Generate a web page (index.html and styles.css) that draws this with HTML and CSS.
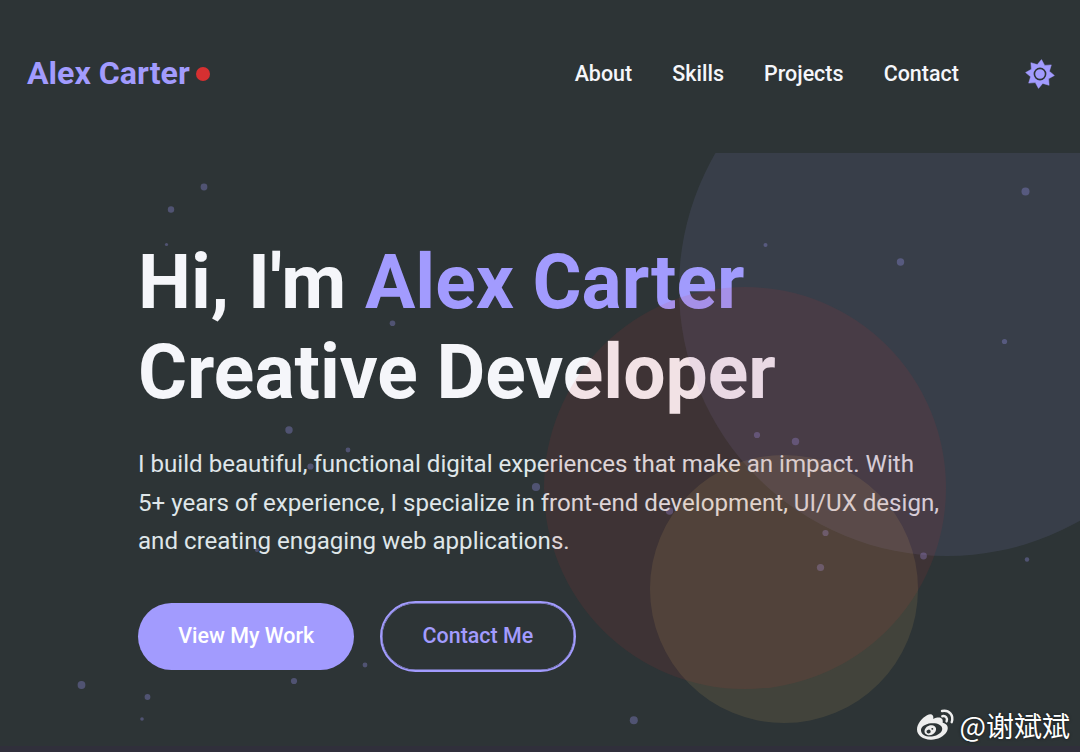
FILE: index.html
```html
<!doctype html>
<html lang="en">
<head>
    <meta charset="UTF-8">
    <meta name="viewport" content="width=device-width, initial-scale=1.0">
    <title>Alex Carter | Creative Developer</title>
    <link rel="stylesheet" href="styles.css">
</head>
<body>
<header class="header">
    <a href="#" class="logo">Alex Carter<span class="logo-dot"></span></a>
    <nav class="nav">
        <a href="#about">About</a>
        <a href="#skills">Skills</a>
        <a href="#projects">Projects</a>
        <a href="#contact">Contact</a>
        <button class="theme-toggle" aria-label="Toggle theme">
            <svg viewBox="-15 -15 30 30" width="30" height="30">
                <path fill="#a29bfe" stroke="#a29bfe" stroke-width=".5" stroke-linejoin="round" d="M1.5-14.4 4.7-8.6 11.3-9.1 9.4-2.7 14.4 1.5 8.6 4.7 9.1 11.3 2.7 9.4-1.5 14.4-4.7 8.6-11.3 9.1-9.4 2.7-14.4-1.5-8.6-4.7-9.1-11.3-2.7-9.4Z"/>
                <circle r="5.6" fill="#a29bfe" stroke="#2d3436" stroke-width="1.6"/>
            </svg>
        </button>
    </nav>
</header>

<section class="hero">
    <!-- particles -->
    <svg class="particles" width="1080" height="593" viewBox="0 153 1080 593">
        <circle cx="204" cy="187" r="3.4"/>
        <circle cx="171" cy="209.5" r="3.2"/>
        <circle cx="166.5" cy="244.5" r="1.6"/>
        <circle cx="392.5" cy="323.3" r="2.8"/>
        <circle cx="289" cy="430" r="3.7"/>
        <circle cx="348" cy="450" r="2.4"/>
        <circle cx="310.5" cy="466.5" r="3.1"/>
        <circle cx="536" cy="487" r="4.1"/>
        <circle cx="257" cy="550" r="2"/>
        <circle cx="669.5" cy="511" r="3.7"/>
        <circle cx="757" cy="435" r="3.1"/>
        <circle cx="795.5" cy="441.5" r="3.7"/>
        <circle cx="825.5" cy="533" r="3.1"/>
        <circle cx="820.5" cy="567.5" r="3.6"/>
        <circle cx="923.5" cy="556" r="3.4"/>
        <circle cx="1027" cy="559.5" r="2.2"/>
        <circle cx="1025.5" cy="191.5" r="4"/>
        <circle cx="765.5" cy="245" r="2"/>
        <circle cx="900.5" cy="262" r="3.7"/>
        <circle cx="1004.5" cy="341.5" r="2.6"/>
        <circle cx="365" cy="665" r="2.4"/>
        <circle cx="294" cy="681" r="3.1"/>
        <circle cx="147.5" cy="697" r="2.9"/>
        <circle cx="142" cy="719" r="1.8"/>
        <circle cx="81.5" cy="685" r="3.9"/>
        <circle cx="633.8" cy="720.3" r="4"/>
    </svg>
    <div class="hero-content">
        <h1>Hi, I'm <span>Alex Carter</span><br>Creative Developer</h1>
        <p>I build beautiful, functional digital experiences that make an impact. With 5+ years of experience, I specialize in front-end development, UI/UX design, and creating engaging web applications.</p>
        <div class="btns">
            <a href="#projects" class="btn btn-primary">View My Work</a>
            <a href="#contact" class="btn btn-outline">Contact Me</a>
        </div>
    </div>
    <div class="shape shape-1"></div>
    <div class="shape shape-2"></div>
    <div class="shape shape-3"></div>
</section>

<section class="about" id="about"></section>

<div class="watermark">
    <svg viewBox="2 4 40 34" width="40" height="34">
        <path fill="#eee" fill-rule="evenodd" d="M4 25.500C4 20 9 14 14 11.300C18 9.300 21 10.500 20.300 15C25 12.800 30.500 12.700 29.700 18.700C34 19.800 36 23 34 27.300C31 33 24 36 17.500 35.700C10 35.500 4 31.500 4 25.500ZM8 26.700C8.500 30.700 13 33 19 32.400C25 31.700 29.500 28.300 29.200 24.500C28.800 20.700 24 18.700 18 19.300C12 20 7.600 23 8 26.700Z"/>
        <path fill="#eee" fill-rule="evenodd" d="M11.500 27C12 23 15.500 20.800 19 21.200C22.700 21.700 24 24.500 22.500 27.500C21 30.500 17.300 31.800 14.500 30.900C12.500 30.300 11.300 29 11.500 27ZM13.500 27.800A2.100 1.900 0 1 0 17.700 27.300A2.100 1.900 0 1 0 13.500 27.800ZM18.300 25A1 .9 0 1 0 20.300 24.800A1 .9 0 1 0 18.300 25Z"/>
        <path fill="none" stroke="#eee" stroke-width="2.400" stroke-linecap="round" d="M29.300 12.200C32.800 11.500 34.800 14.200 33.600 17.400M29 7C36 5.500 41 11.200 38.700 18.200"/>
    </svg>
    <span>@谢斌斌</span>
</div>
</body>
</html>
```
FILE: styles.css
```css
*{
    margin: 0;
    padding: 0;
    box-sizing: border-box;
}
body{
    height: 752px;
    overflow: hidden;
    font-family: Roboto, "Noto Sans CJK SC", sans-serif;
    background-color: #2d3436;
    color: #f5f6fa;
}
a{
    text-decoration: none;
    color: inherit;
}
.header{
    display: flex;
    justify-content: space-between;
    align-items: center;
    height: 153px;
    padding: 0 25px 6px 27px;
}
.logo{
    display: flex;
    align-items: center;
    gap: 6px;
    padding-bottom: 1px;
    font-size: 32.16px;
    font-weight: 700;
    color: #a29bfe;
}
.logo-dot{
    width: 14px;
    height: 14px;
    margin-top: 2px;
    border-radius: 50%;
    background-color: #d63031;
}
.nav{
    display: flex;
    align-items: center;
    gap: 40.2px;
    font-size: 21.44px;
    font-weight: 500;
}
.theme-toggle{
    display: flex;
    margin-left: 26px;
    border: none;
    background: none;
}
/* hero */
.hero{
    position: relative;
    height: 593px;
    overflow: hidden;
    padding: 84px 138px 0;
}
.particles{
    position: absolute;
    top: 0;
    left: 0;
    fill: #a29bfe;
    opacity: 0.3;
}
.hero-content{
    position: relative;
}
.hero-content h1{
    font-size: 75.04px;
    font-weight: 700;
    line-height: 1.2;
}
.hero-content h1 span{
    color: #a29bfe;
}
.hero-content p{
    width: 804px;
    margin: 28px 0 40px;
    font-size: 24.12px;
    line-height: 1.6;
    color: #dfe6e9;
}
.btns{
    display: flex;
    align-items: center;
    gap: 25.5px;
}
.btn{
    padding: 20px 40.2px 22px;
    border-radius: 67px;
    font-size: 21.44px;
    font-weight: 500;
    line-height: 25px;
}
.btn-primary{
    background-color: #a29bfe;
    color: #fff;
}
.btn-outline{
    padding: 20px 40.6px 22px;
    border: 2px solid #a29bfe;
    box-shadow: inset 0 0 0 0.5px #a29bfe;
    color: #a29bfe;
}
/* translucent circles lie over the text */
.shape{
    position: absolute;
    border-radius: 50%;
    opacity: 0.1;
}
.shape-1{
    top: -133px;
    left: 679px;
    width: 536px;
    height: 536px;
    background-color: #9a9ffa;
}
.shape-2{
    top: 134px;
    left: 544px;
    width: 402px;
    height: 402px;
    background-color: #d63031;
}
.shape-3{
    top: 302px;
    left: 650px;
    width: 268px;
    height: 268px;
    background-color: #fdcb6e;
}
.about{
    height: 6px;
    background-color: #302f3b;
}
.watermark{
    position: absolute;
    right: 10px;
    bottom: 7px;
    display: flex;
    align-items: center;
    gap: 5px;
    font-family: "Noto Sans CJK SC", sans-serif;
    font-size: 28px;
    line-height: 40px;
    color: #fff;
    text-shadow: 0 0 3px rgba(0, 0, 0, 0.6);
}
```
